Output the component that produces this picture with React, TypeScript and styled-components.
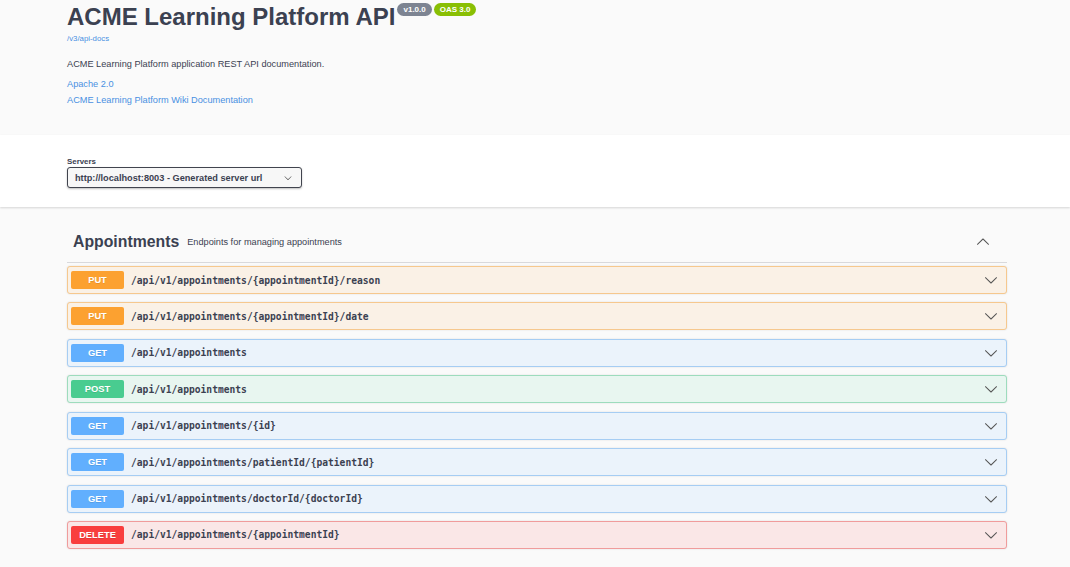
import React from 'react';
import styled, { createGlobalStyle } from 'styled-components';

type Method = 'get' | 'put' | 'post' | 'delete';

const methodColors: Record<Method, { main: string; bg: string; border: string }> = {
  put: { main: '#fca130', bg: '#faf1e6', border: '#f6c88e' },
  get: { main: '#61affe', bg: '#ebf3fb', border: '#a6cdf3' },
  post: { main: '#49cc90', bg: '#e8f6f0', border: '#9ddcbd' },
  delete: { main: '#f93e3e', bg: '#fae7e7', border: '#f09c9c' },
};

const GlobalStyle = createGlobalStyle`
  html, body {
    margin: 0;
    padding: 0;
    background: #fafafa;
  }
  body {
    font-family: "Liberation Sans", Arial, sans-serif;
    color: #3b4151;
  }
`;

const Page = styled.div`
  width: 1070px;
  height: 567px;
  overflow: hidden;
  background: #fafafa;
  display: flex;
  flex-direction: column;
`;

const InfoSection = styled.section`
  height: 135px;
  box-sizing: border-box;
  padding: 3px 0 0 67px;
  display: flex;
  flex-direction: column;
`;

const TitleRow = styled.div`
  display: flex;
  align-items: flex-start;
  gap: 2px;
  height: 28px;
`;

const Title = styled.h2`
  margin: 0 0 0 0;
  font-size: 24px;
  line-height: 28px;
  font-weight: 700;
  color: #3b4151;
`;

const Badge = styled.span<{ $bg: string }>`
  height: 13px;
  padding: 0 6px;
  border-radius: 7px;
  background: ${p => p.$bg};
  color: #fff;
  font-size: 8px;
  font-weight: 700;
  line-height: 13px;
`;

const BaseUrl = styled.a`
  margin-top: 3px;
  font-size: 7.8px;
  line-height: 10px;
  color: #4990e2;
  text-decoration: none;
`;

const Description = styled.p`
  margin: 14px 0 0;
  font-size: 9.2px;
  line-height: 12px;
  color: #3b4151;
`;

const InfoLink = styled.a<{ $gap: number }>`
  margin-top: ${p => p.$gap}px;
  font-size: 9.2px;
  line-height: 12px;
  color: #4990e2;
  text-decoration: none;
`;

const ServersSection = styled.section`
  height: 72px;
  box-sizing: border-box;
  background: #fff;
  box-shadow: 0 1px 2px 0 rgba(0, 0, 0, 0.15);
  padding: 22px 0 0 67px;
  display: flex;
  flex-direction: column;
  position: relative;
  z-index: 1;
`;

const ServersLabel = styled.span`
  font-size: 7.9px;
  line-height: 10px;
  font-weight: 700;
  color: #3b4151;
`;

const Select = styled.div`
  width: 235px;
  height: 21px;
  box-sizing: border-box;
  border: 1.5px solid #41444e;
  border-radius: 3px;
  box-shadow: 0 1px 2px 0 rgba(0, 0, 0, 0.25);
  background: #f7f7f7;
  display: flex;
  align-items: center;
  justify-content: space-between;
  padding: 0 9px 0 7px;
  font-size: 9.2px;
  font-weight: 700;
  color: #3b4151;
`;

const Operations = styled.div`
  padding: 14px 63px 0 67px;
  display: flex;
  flex-direction: column;
`;

const TagHeader = styled.div`
  height: 42px;
  box-sizing: border-box;
  border-bottom: 1px solid rgba(59, 65, 81, 0.18);
  display: flex;
  align-items: center;
  padding: 0 17px 0 6px;
`;

const TagName = styled.span`
  font-size: 15.8px;
  font-weight: 700;
  color: #3b4151;
`;

const TagDescription = styled.small`
  flex: 1;
  padding-left: 8px;
  font-size: 9.2px;
  color: #3b4151;
`;

const OpList = styled.div`
  margin-top: 3px;
  display: flex;
  flex-direction: column;
  gap: 8.43px;
`;

const OpBlock = styled.div<{ $method: Method }>`
  height: 28px;
  box-sizing: border-box;
  border: 1px solid ${p => methodColors[p.$method].border};
  background: ${p => methodColors[p.$method].bg};
  border-radius: 3px;
  box-shadow: 0 0 2px rgba(0, 0, 0, 0.12);
  display: flex;
  align-items: center;
  padding: 0 8px 0 3px;
`;

const MethodBadge = styled.span<{ $method: Method }>`
  width: 53px;
  height: 18px;
  border-radius: 2px;
  background: ${p => methodColors[p.$method].main};
  color: #fff;
  font-size: 9.3px;
  font-weight: 700;
  display: flex;
  align-items: center;
  justify-content: center;
  text-shadow: 0 1px 0 rgba(0, 0, 0, 0.1);
`;

const OpPath = styled.span`
  flex: 1;
  padding-left: 7px;
  font-family: "DejaVu Sans Mono", "Liberation Mono", monospace;
  font-size: 9.65px;
  font-weight: 700;
  color: #3b4151;
`;

const Chevron = ({ up, size = 14, color = '#555' }: { up?: boolean; size?: number; color?: string }) => (
  <svg width={size} height={size} viewBox="0 0 20 20" style={{ transform: up ? 'rotate(180deg)' : undefined }}>
    <path
      fill={color}
      d="M17.418 6.109c.272-.268.709-.268.979 0s.271.701 0 .969l-7.908 7.83c-.27.268-.707.268-.979 0l-7.908-7.83c-.27-.268-.27-.701 0-.969.271-.268.709-.268.979 0L10 13.25l7.418-7.141z"
    />
  </svg>
);

const operations: { method: Method; path: string }[] = [
  { method: 'put', path: '/api/v1/appointments/{appointmentId}/reason' },
  { method: 'put', path: '/api/v1/appointments/{appointmentId}/date' },
  { method: 'get', path: '/api/v1/appointments' },
  { method: 'post', path: '/api/v1/appointments' },
  { method: 'get', path: '/api/v1/appointments/{id}' },
  { method: 'get', path: '/api/v1/appointments/patientId/{patientId}' },
  { method: 'get', path: '/api/v1/appointments/doctorId/{doctorId}' },
  { method: 'delete', path: '/api/v1/appointments/{appointmentId}' },
];

const App: React.FC = () => {
  return (
    <Page>
      <GlobalStyle />
      <InfoSection>
        <TitleRow>
          <Title>ACME Learning Platform API</Title>
          <Badge $bg="#7d8492">v1.0.0</Badge>
          <Badge $bg="#89bf04">OAS 3.0</Badge>
        </TitleRow>
        <BaseUrl href="#">/v3/api-docs</BaseUrl>
        <Description>ACME Learning Platform application REST API documentation.</Description>
        <InfoLink $gap={8} href="#">Apache 2.0</InfoLink>
        <InfoLink $gap={4} href="#">ACME Learning Platform Wiki Documentation</InfoLink>
      </InfoSection>

      <ServersSection>
        <ServersLabel>Servers</ServersLabel>
        <Select>
          <span>http://localhost:8003 - Generated server url</span>
          <Chevron size={8} color="#444" />
        </Select>
      </ServersSection>

      <Operations>
        <TagHeader>
          <TagName>Appointments</TagName>
          <TagDescription>Endpoints for managing appointments</TagDescription>
          <Chevron up size={14} color="#555" />
        </TagHeader>
        <OpList>
          {operations.map((op, i) => (
            <OpBlock key={i} $method={op.method}>
              <MethodBadge $method={op.method}>{op.method.toUpperCase()}</MethodBadge>
              <OpPath>{op.path}</OpPath>
              <Chevron size={14} color="#555" />
            </OpBlock>
          ))}
        </OpList>
      </Operations>
    </Page>
  );
};

export default App;
